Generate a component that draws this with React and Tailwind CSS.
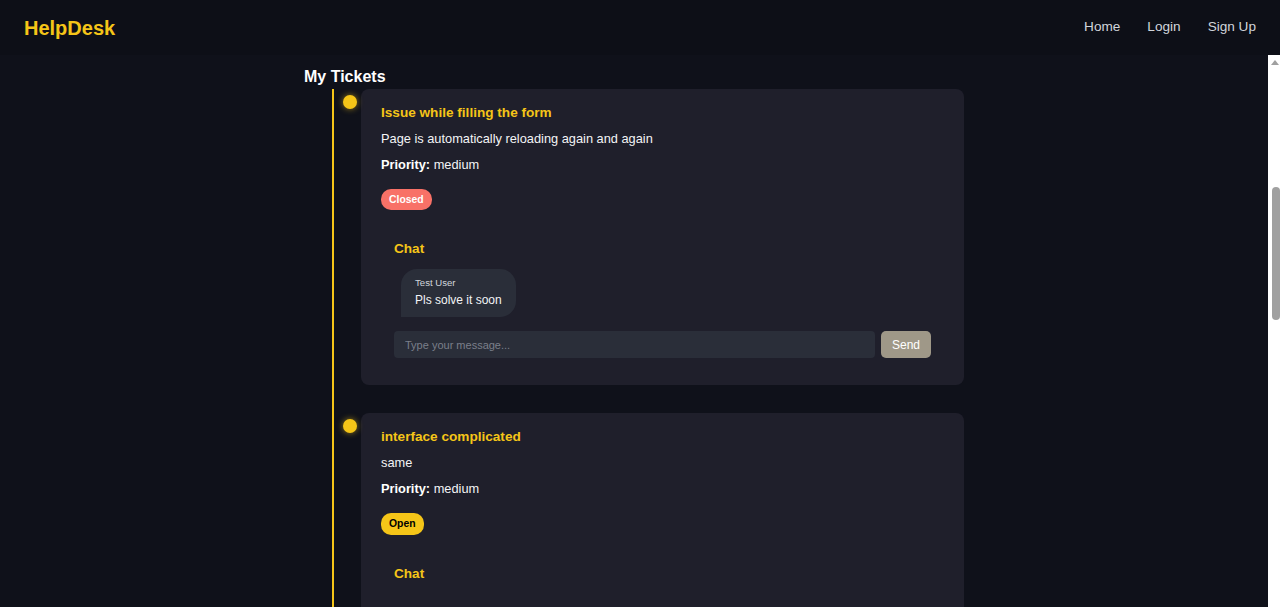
import React from "react";

const tickets = [
  {
    title: "Issue while filling the form",
    desc: "Page is automatically reloading again and again",
    priority: "medium",
    status: "Closed",
    messages: [{ user: "Test User", text: "Pls solve it soon" }],
  },
  {
    title: "interface complicated",
    desc: "same",
    priority: "medium",
    status: "Open",
    messages: [],
  },
];

function Ticket({ t }) {
  return (
    <li className="relative pb-7">
      <span className="absolute left-[-18px] top-[6px] h-[14px] w-[14px] rounded-full bg-[#f5c518] shadow-[0_0_6px_rgba(245,197,24,0.6)]" />
      <div className="rounded-lg bg-[#1f1f2b] px-5 pt-4 pb-[14px]">
        <h3 className="text-[13.6px] font-bold leading-4 text-[#f5c518]">{t.title}</h3>
        <p className="mt-[10px] text-[12.8px] leading-4 text-[#f3f4f6]">{t.desc}</p>
        <p className="mt-[10px] text-[12.8px] leading-4 text-[#f3f4f6]">
          <span className="font-bold text-white">Priority:</span> {t.priority}
        </p>
        <div className="mt-4 flex">
          {t.status === "Closed" ? (
            <span className="rounded-[10px] bg-[#f87167] px-2 py-[5px] text-[10.4px] font-bold leading-[11px] text-white">
              Closed
            </span>
          ) : (
            <span className="rounded-[10px] bg-[#f5c518] px-2 py-[5px] text-[10.4px] font-bold leading-[12px] text-black">
              Open
            </span>
          )}
        </div>
        <div className="mt-[17px] flex flex-col px-[13px] pt-[14px] pb-[13px]">
          <h4 className="text-[13.6px] font-bold leading-4 text-[#f5c518]">Chat</h4>
          <div className="mt-[12px] mb-[14px] flex flex-col gap-2 pl-[7px]">
            {t.messages.map((m, i) => (
              <div
                key={i}
                className="self-start rounded-2xl rounded-bl-none bg-[#2a2e39] px-[14px] pt-2 pb-[10px]"
              >
                <div className="text-[9.6px] leading-3 text-[#d1d5db]">{m.user}</div>
                <div className="mt-1 text-[12px] leading-[14px] text-[#f3f4f6]">{m.text}</div>
              </div>
            ))}
          </div>
          <div className="flex gap-[6px]">
            <input
              className="h-[27px] flex-1 rounded-[4px] bg-[#2a2e39] px-[11px] text-[11px] text-white outline-none placeholder:text-[#7a7f8a]"
              placeholder="Type your message..."
            />
            <button className="h-[27px] rounded-[5px] bg-[#9f9888] px-[11px] text-[12px] text-white">
              Send
            </button>
          </div>
        </div>
      </div>
    </li>
  );
}

export default function App() {
  return (
    <div
      className="flex h-[607px] flex-col overflow-hidden bg-[#0f111a]"
      style={{ fontFamily: '"Liberation Sans", Arial, sans-serif' }}
    >
      <nav className="flex h-[55px] shrink-0 items-center justify-between bg-[#0d0f17] px-6">
        <span className="text-[20px] font-bold leading-[24px] text-[#f5c518]">HelpDesk</span>
        <div className="flex items-center gap-[27px] text-[13.6px] text-[#d1d5db]">
          <a>Home</a>
          <a>Login</a>
          <a>Sign Up</a>
        </div>
      </nav>
      <div className="flex min-h-0 flex-1">
        <main className="min-w-0 flex-1 overflow-hidden">
          <div className="mx-auto w-[660px] pt-[12px]">
            <h2 className="text-[16px] font-bold leading-[20px] text-white">My Tickets</h2>
            <ul className="mt-[2px] ml-[28px] border-l-2 border-[#f5c518] pl-[27px]">
              {tickets.map((t, i) => (
                <Ticket key={i} t={t} />
              ))}
            </ul>
          </div>
        </main>
        <div className="relative w-[12px] shrink-0 bg-white">
          <span className="absolute left-[3px] top-[5px] h-0 w-0 border-x-[4px] border-b-[5px] border-x-transparent border-b-[#a0a0a0]" />
          <span className="absolute right-0 top-[132px] h-[133px] w-[8px] rounded-full bg-[#a0a0a0]" />
        </div>
      </div>
    </div>
  );
}
